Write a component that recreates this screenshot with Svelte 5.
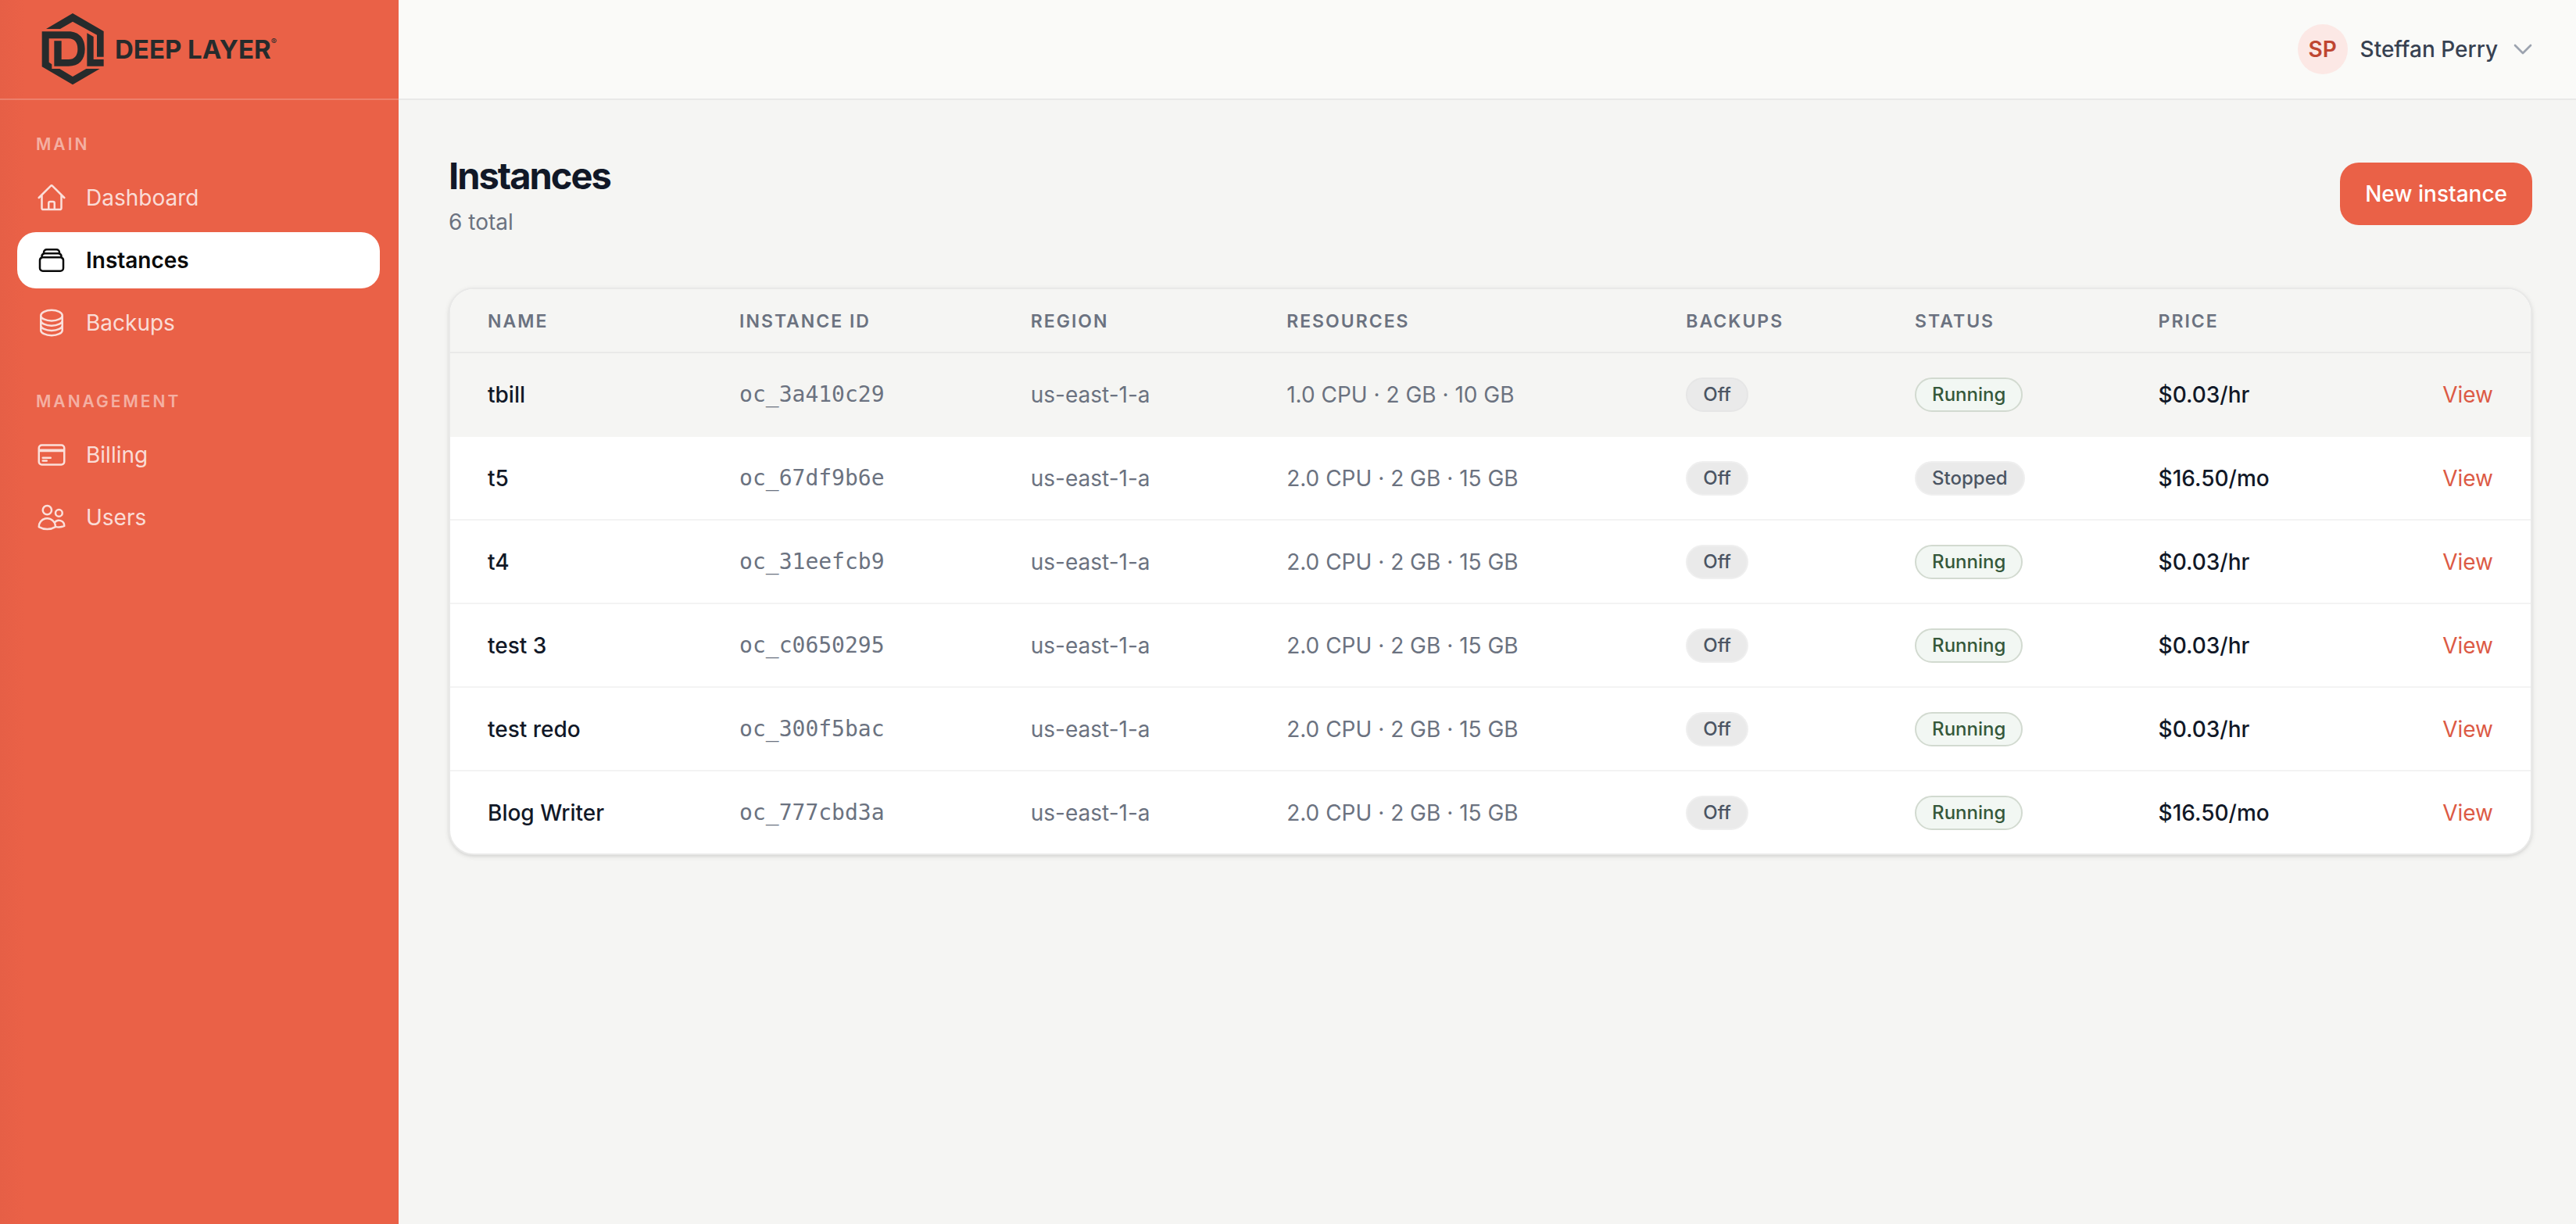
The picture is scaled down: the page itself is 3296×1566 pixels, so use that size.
<script>
  const sections = [
    {
      title: "Main",
      items: [
        {
          label: "Dashboard",
          icon: "m2.25 12 8.954-8.955c.44-.439 1.152-.439 1.591 0L21.75 12M4.5 9.75v10.125c0 .621.504 1.125 1.125 1.125H9.75v-4.875c0-.621.504-1.125 1.125-1.125h2.25c.621 0 1.125.504 1.125 1.125V21h4.125c.621 0 1.125-.504 1.125-1.125V9.75M8.25 21h8.25",
        },
        {
          label: "Instances",
          icon: "M6 6.878V6a2.25 2.25 0 0 1 2.25-2.25h7.5A2.25 2.25 0 0 1 18 6v.878m-12 0c.235-.083.487-.128.75-.128h10.5c.263 0 .515.045.75.128m-12 0A2.25 2.25 0 0 0 4.5 9v.878m13.5-3A2.25 2.25 0 0 1 19.5 9v.878m0 0a2.246 2.246 0 0 0-.75-.128H5.25c-.263 0-.515.045-.75.128m15 0A2.25 2.25 0 0 1 21 12v6a2.25 2.25 0 0 1-2.25 2.25H5.25A2.25 2.25 0 0 1 3 18v-6c0-.98.626-1.813 1.5-2.122",
        },
        {
          label: "Backups",
          icon: "M20.25 6.375c0 2.278-3.694 4.125-8.25 4.125S3.75 8.653 3.75 6.375m16.5 0c0-2.278-3.694-4.125-8.25-4.125S3.75 4.097 3.75 6.375m16.5 0v11.25c0 2.278-3.694 4.125-8.25 4.125s-8.25-1.847-8.25-4.125V6.375m16.5 0v3.75m-16.5-3.75v3.75m16.5 0v3.75C20.25 16.153 16.556 18 12 18s-8.25-1.847-8.25-4.125v-3.75m16.5 0c0 2.278-3.694 4.125-8.25 4.125s-8.25-1.847-8.25-4.125",
        },
      ],
    },
    {
      title: "Management",
      items: [
        {
          label: "Billing",
          icon: "M2.25 8.25h19.5M2.25 9h19.5m-16.5 5.25h6m-6 2.25h3m-3.75 3h15a2.25 2.25 0 0 0 2.25-2.25V6.75A2.25 2.25 0 0 0 19.5 4.5h-15a2.25 2.25 0 0 0-2.25 2.25v10.5A2.25 2.25 0 0 0 4.5 19.5Z",
        },
        {
          label: "Users",
          icon: "M15 19.128a9.38 9.38 0 0 0 2.625.372 9.337 9.337 0 0 0 4.121-.952 4.125 4.125 0 0 0-7.533-2.493M15 19.128v-.003c0-1.113-.285-2.16-.786-3.07M15 19.128v.106A12.318 12.318 0 0 1 8.624 21c-2.331 0-4.512-.645-6.374-1.766l-.001-.109a6.375 6.375 0 0 1 11.964-3.07M12 6.375a3.375 3.375 0 1 1-6.75 0 3.375 3.375 0 0 1 6.75 0Zm8.25 2.25a2.625 2.625 0 1 1-5.25 0 2.625 2.625 0 0 1 5.25 0Z",
        },
      ],
    },
  ];

  // widths are percentages of the table
  const columns = [
    { label: "Name", width: 12.1 },
    { label: "Instance ID", width: 14 },
    { label: "Region", width: 12.3 },
    { label: "Resources", width: 19.2 },
    { label: "Backups", width: 11 },
    { label: "Status", width: 11.7 },
    { label: "Price", width: 11.7 },
  ];

  const instances = [
    { name: "tbill", id: "oc_3a410c29", cpu: "1.0", disk: 10, status: "Running", price: "$0.03/hr" },
    { name: "t5", id: "oc_67df9b6e", cpu: "2.0", disk: 15, status: "Stopped", price: "$16.50/mo" },
    { name: "t4", id: "oc_31eefcb9", cpu: "2.0", disk: 15, status: "Running", price: "$0.03/hr" },
    { name: "test 3", id: "oc_c0650295", cpu: "2.0", disk: 15, status: "Running", price: "$0.03/hr" },
    { name: "test redo", id: "oc_300f5bac", cpu: "2.0", disk: 15, status: "Running", price: "$0.03/hr" },
    { name: "Blog Writer", id: "oc_777cbd3a", cpu: "2.0", disk: 15, status: "Running", price: "$16.50/mo" },
  ];

  let page = $state("Instances");
  let highlighted = $state("oc_3a410c29");
</script>

<div class="app">
  <aside class="sidebar">
    <a class="brand" href="#home">
      <svg class="brand__mark" viewBox="158 52 240 276" aria-hidden="true">
        <path d="M278 52 397 121V219H371V135L278 84 230 112H176Z" />
        <path d="M160 122H262C304 122 325 150 325 189C325 230 302 255 262 255H207V158H235V229H262C285 229 297 214 297 189C297 164 285 149 262 149H187V240L198 248V265H228L278 295 330 265H382L278 326 160 257Z" />
        <path d="M333 128 358 142V229H397V255H333Z" />
      </svg>
      <span class="brand__name">DEEP LAYER<sup>®</sup></span>
    </a>

    <nav>
      {#each sections as section}
        <div class="section">
          <h2 class="section__title">{section.title}</h2>
          {#each section.items as item}
            <a
              class="link"
              class:active={page === item.label}
              href="#{item.label.toLowerCase()}"
              onclick={() => (page = item.label)}
            >
              <svg class="link__icon" viewBox="0 0 24 24" aria-hidden="true">
                <path d={item.icon} />
              </svg>
              {item.label}
            </a>
          {/each}
        </div>
      {/each}
    </nav>
  </aside>

  <div class="main">
    <header class="topbar">
      <button class="user">
        <span class="avatar">SP</span>
        Steffan Perry
        <svg class="user__chevron" viewBox="0 0 24 24" aria-hidden="true">
          <path d="m19.5 8.25-7.5 7.5-7.5-7.5" />
        </svg>
      </button>
    </header>

    <main class="content">
      <div class="heading">
        <div>
          <h1>Instances</h1>
          <p>{instances.length} total</p>
        </div>
        <button class="primary">New instance</button>
      </div>

      <div class="card">
        <table>
          <thead>
            <tr>
              {#each columns as column}
                <th scope="col" style:width="{column.width}%">{column.label}</th>
              {/each}
              <th></th>
            </tr>
          </thead>
          <tbody>
            {#each instances as row}
              <tr
                class:highlighted={highlighted === row.id}
                onmouseenter={() => (highlighted = row.id)}
              >
                <td class="strong">{row.name}</td>
                <td class="mono">{row.id}</td>
                <td>us-east-1-a</td>
                <td>{row.cpu} CPU · 2 GB · {row.disk} GB</td>
                <td><span class="badge">Off</span></td>
                <td><span class="badge" class:running={row.status === "Running"}>{row.status}</span></td>
                <td class="strong">{row.price}</td>
                <td class="action"><a href="#{row.id}">View</a></td>
              </tr>
            {/each}
          </tbody>
        </table>
      </div>
    </main>
  </div>
</div>

<style>
  :global(body) {
    margin: 0;
    background: #f5f5f3;
  }

  .app {
    display: flex;
    min-height: 100vh;
    font-family: Inter, "Liberation Sans", sans-serif;
    font-size: 28px;
    line-height: 40px;
    color: #6b7280;
  }

  .app :global(*) {
    box-sizing: border-box;
  }

  a {
    color: inherit;
    text-decoration: none;
  }

  button {
    border: 0;
    font: inherit;
    cursor: pointer;
  }

  h1,
  h2,
  p {
    margin: 0;
  }

  /* sidebar */
  .sidebar {
    flex: none;
    width: 510px;
    background: linear-gradient(to right, #e65f46, #ea6147 32px);
  }

  .brand {
    display: flex;
    align-items: center;
    gap: 14px;
    height: 128px;
    padding-left: 53px;
    border-bottom: 2px solid rgba(255, 255, 255, 0.2);
    color: #262b2c;
  }

  .brand__mark {
    width: 80px;
    height: 92px;
    fill: currentColor;
  }

  .brand__name {
    font-size: 33px;
    font-weight: 700;
  }

  .brand__name sup {
    font-size: 11px;
    font-weight: 500;
    line-height: 0;
    vertical-align: 18px;
  }

  nav {
    display: flex;
    flex-direction: column;
    gap: 48px;
    padding: 40px 24px 40px 22px;
  }

  .section {
    display: flex;
    flex-direction: column;
    gap: 8px;
  }

  .section__title {
    margin-bottom: 8px;
    padding-left: 24px;
    font-size: 21px;
    font-weight: 600;
    line-height: 33px;
    letter-spacing: 3px;
    text-transform: uppercase;
    color: rgba(255, 255, 255, 0.5);
  }

  .link {
    display: flex;
    align-items: center;
    gap: 24px;
    padding: 16px 24px;
    border-radius: 24px;
    color: rgba(255, 255, 255, 0.8);
  }

  .link.active {
    background: #fff;
    font-weight: 600;
    color: #0a0a0a;
  }

  .link__icon {
    width: 40px;
    height: 40px;
    fill: none;
    stroke: currentColor;
    stroke-width: 1.5;
    stroke-linecap: round;
    stroke-linejoin: round;
  }

  /* top bar */
  .main {
    flex: 1;
    min-width: 0;
  }

  .topbar {
    display: flex;
    align-items: center;
    justify-content: flex-end;
    height: 128px;
    padding-right: 52px;
    border-bottom: 2px solid #e9e9e8;
    background: #fafaf8;
  }

  .user {
    display: flex;
    align-items: center;
    gap: 16px;
    padding: 0;
    background: none;
    font-weight: 500;
    color: #374151;
  }

  .avatar {
    display: grid;
    place-items: center;
    width: 64px;
    height: 64px;
    border-radius: 50%;
    background: #fce8e5;
    font-weight: 600;
    color: #bf4632;
  }

  .user__chevron {
    width: 32px;
    height: 32px;
    fill: none;
    stroke: #9ca3af;
    stroke-width: 2;
    stroke-linecap: round;
    stroke-linejoin: round;
  }

  /* page */
  .content {
    padding: 64px 56px 64px 64px;
  }

  .heading {
    display: flex;
    align-items: center;
    justify-content: space-between;
    margin-bottom: 64px;
  }

  h1 {
    margin-bottom: 6px;
    font-size: 47px;
    font-weight: 700;
    line-height: 66px;
    letter-spacing: -2px;
    color: #111827;
  }

  .primary {
    padding: 20px 32px;
    border-radius: 24px;
    background: #ea6147;
    font-weight: 500;
    color: #fff;
  }

  .card {
    overflow: hidden;
    border: 2px solid #e9e9e8;
    border-radius: 32px;
    background: #fff;
    box-shadow: 0 2px 6px rgba(0, 0, 0, 0.1), 0 2px 4px -2px rgba(0, 0, 0, 0.1);
  }

  table {
    width: 100%;
    border-spacing: 0;
    white-space: nowrap;
  }

  th,
  td {
    padding: 0 48px;
    text-align: left;
  }

  th {
    height: 82px;
    padding-top: 2px;
    border-bottom: 2px solid #e9e9e8;
    background: #f5f5f3;
    font-size: 23px;
    font-weight: 600;
    line-height: 32px;
    letter-spacing: 2px;
    text-transform: uppercase;
  }

  td {
    height: 107px;
    border-bottom: 2px solid #f3f3f3;
  }

  tbody tr:last-child td {
    height: 105px;
    border-bottom: 0;
  }

  .highlighted td {
    border-color: #f5f5f3;
    background: #f5f5f3;
  }

  .strong {
    font-weight: 500;
    color: #111827;
  }

  .mono {
    font-family: "DejaVu Sans Mono", monospace;
  }

  .badge {
    display: inline-block;
    padding: 4px 20px;
    border: 2px solid #efefef;
    border-radius: 22px;
    background: #eaeaea;
    font-size: 24px;
    font-weight: 500;
    line-height: 32px;
    color: #4b5563;
    vertical-align: middle;
  }

  .highlighted .badge:not(.running) {
    border-color: #e6e6e6;
  }

  .badge.running {
    border-color: #d2dad0;
    background: #f2f7f3;
    color: #35583a;
  }

  td.action {
    text-align: right;
    color: #dc5a45;
  }
</style>
